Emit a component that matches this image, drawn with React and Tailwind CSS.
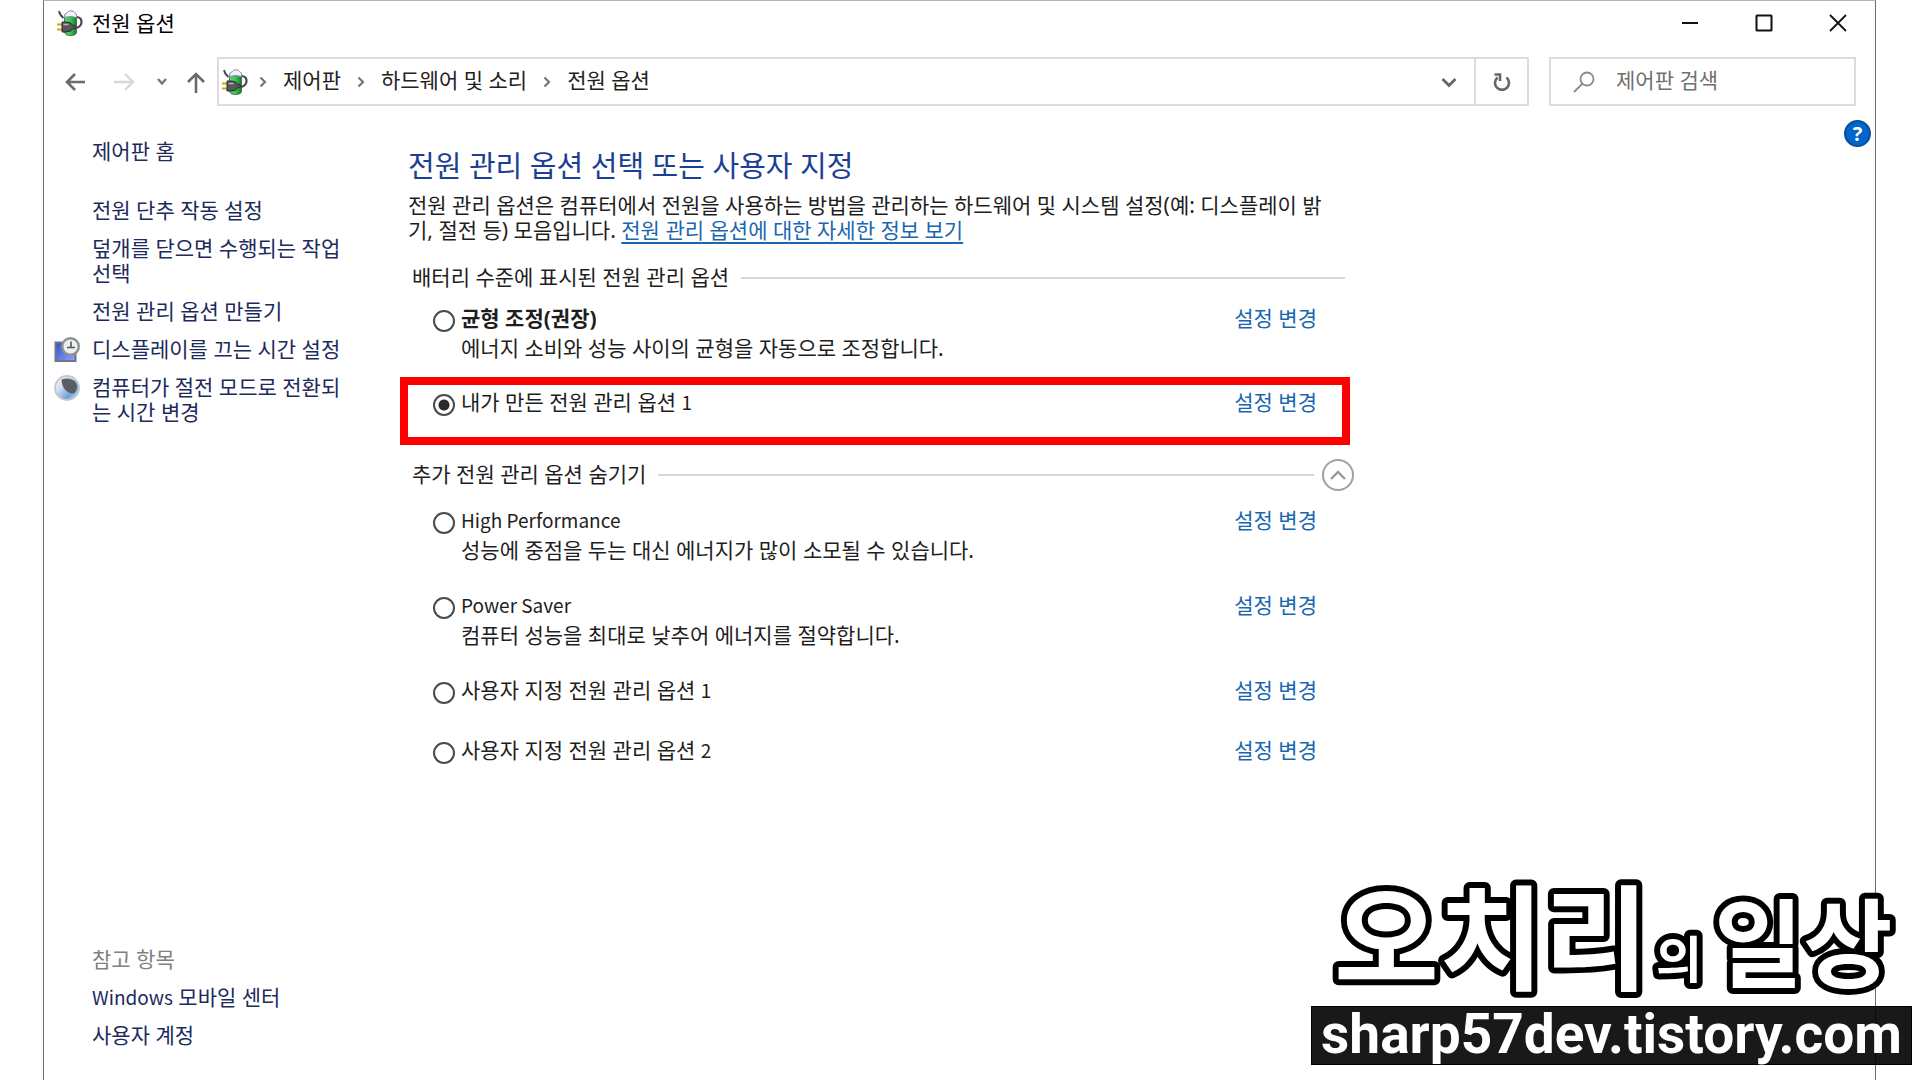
function PowerIcon() {
  return (
    <svg viewBox="0 0 26 26" className="h-[26px] w-[26px] shrink-0" aria-hidden="true">
      <defs>
        <linearGradient id="cell" x1="0" y1="0" x2="1" y2="0">
          <stop offset="0" stopColor="#5fd873" />
          <stop offset="0.5" stopColor="#3cc455" />
          <stop offset="1" stopColor="#157a2c" />
        </linearGradient>
      </defs>
      <path d="M7.5 5 V22 Q8 25.500 13.500 25.500 Q19.500 25.500 19.500 22 V5 Z" fill="url(#cell)" stroke="#3d5a45" strokeWidth="0.800" />
      <path d="M7.500 7.500 Q7 3 10.500 2.500 Q11 0.800 14 0.800 Q17 0.800 17.500 2.500 Q20 3 19.800 7.500 Q13 5.500 7.500 7.500 Z" fill="#f2f2fa" stroke="#8a8aa8" strokeWidth="1" />
      <path d="M20 7 Q24.800 7.500 24.500 12.500 Q24 17 18.500 18" fill="none" stroke="#45494c" strokeWidth="2.200" />
      <path d="M2 1 Q3 5.500 6.500 8" fill="none" stroke="#44484c" strokeWidth="1.800" />
      <path d="M0 14.500 h5 M0 19.500 h5" stroke="#d0a90a" strokeWidth="2.200" />
      <path d="M5 12 h4 q5 0 6.500 3 q3 0 3 2 q0 2 -3 2 q-1.500 3 -6.500 3 h-4 Z" fill="#55585b" stroke="#2a2a2a" strokeWidth="1" />
      <path d="M6.500 14.500 h5" stroke="#b5b5b5" strokeWidth="1.600" />
    </svg>
  );
}

function DisplayClockIcon() {
  return (
    <svg viewBox="0 0 26 26" className="h-[26px] w-[26px]" aria-hidden="true">
      <defs>
        <linearGradient id="screen" x1="0" y1="0" x2="1" y2="1">
          <stop offset="0" stopColor="#3550c8" />
          <stop offset="1" stopColor="#8fa6f5" />
        </linearGradient>
      </defs>
      <rect x="1.500" y="5.500" width="20" height="18.500" fill="url(#screen)" stroke="#6f7590" strokeWidth="2" />
      <circle cx="16.500" cy="9.500" r="8.300" fill="#eef1ee" stroke="#8d9290" strokeWidth="2.400" />
      <path d="M17 4.500 v6.500 M13 10.500 h8" stroke="#41606c" strokeWidth="1.600" />
    </svg>
  );
}

function MoonIcon() {
  return (
    <svg viewBox="0 0 26 26" className="h-[26px] w-[26px]" aria-hidden="true">
      <defs>
        <linearGradient id="moon" x1="0" y1="0" x2="1" y2="1">
          <stop offset="0" stopColor="#f2f5f7" />
          <stop offset="0.350" stopColor="#d3e0f0" />
          <stop offset="0.700" stopColor="#6f9fe0" />
          <stop offset="1" stopColor="#e8eef5" />
        </linearGradient>
      </defs>
      <circle cx="13" cy="13" r="12" fill="url(#moon)" stroke="#c3c9cd" strokeWidth="1.800" />
      <path d="M7.500 4.500 Q16 1.500 21.500 7 Q25 13 20 18.500 Q13 18.500 9.500 12.500 Q7.500 8.500 7.500 4.500 Z" fill="#5a5d61" />
    </svg>
  );
}

function Chevron() {
  return (
    <svg viewBox="0 0 8 12" className="h-3 w-2" fill="none" stroke="#777" strokeWidth="2.200" aria-hidden="true">
      <path d="M1.500 1.500 L6 6 L1.500 10.500" />
    </svg>
  );
}

const tasks = [
  { lines: ["전원 단추 작동 설정"] },
  { lines: ["덮개를 닫으면 수행되는 작업", "선택"] },
  { lines: ["전원 관리 옵션 만들기"] },
  { lines: ["디스플레이를 끄는 시간 설정"], icon: <DisplayClockIcon /> },
  { lines: ["컴퓨터가 절전 모드로 전환되", "는 시간 변경"], icon: <MoonIcon /> },
];

function Latin({ children }) {
  return <span className="font-['Noto_Sans_CJK_KR',sans-serif] text-[19px] leading-none">{children}</span>;
}

function Plan({ id, name, desc, bold, checked }) {
  return (
    <div className="flex min-h-[30px] items-start pr-7 pl-[25px]">
      <input
        type="radio"
        name="plan"
        id={id}
        defaultChecked={checked}
        className="mt-1 h-[22px] w-[22px] shrink-0 appearance-none rounded-full border-2 border-[#4a4a4a] bg-white checked:bg-[radial-gradient(circle,#2b2b2b_5px,#fff_6px)]"
      />
      <div className="ml-[6px] flex-1">
        <label htmlFor={id} className={bold ? "block font-bold" : "block"}>
          {name}
        </label>
        {desc && <p className="mt-[5px]">{desc}</p>}
      </div>
      <a href="#settings" className="text-[#1a66b0]">
        설정 변경
      </a>
    </div>
  );
}

function TitleBar() {
  return (
    <header className="flex h-11 items-center pl-[13px]">
      <PowerIcon />
      <h1 className="ml-[9px] flex-1 text-black">전원 옵션</h1>
      <button aria-label="최소화" className="flex h-full w-[74px] items-center justify-center">
        <svg viewBox="0 0 18 18" className="h-[18px] w-[18px]" stroke="#111" strokeWidth="2" fill="none"><path d="M1 9 h16" /></svg>
      </button>
      <button aria-label="최대화" className="flex h-full w-[74px] items-center justify-center">
        <svg viewBox="0 0 18 18" className="h-[18px] w-[18px]" stroke="#111" strokeWidth="2" fill="none"><rect x="1.500" y="1.500" width="15" height="15" rx="0.500" /></svg>
      </button>
      <button aria-label="닫기" className="flex h-full w-[74px] items-center justify-center">
        <svg viewBox="0 0 18 18" className="h-[18px] w-[18px]" stroke="#111" strokeWidth="1.800" fill="none"><path d="M1 1 L17 17 M17 1 L1 17" /></svg>
      </button>
    </header>
  );
}

function NavBar() {
  return (
    <nav className="mt-3 mr-[19px] ml-5 flex h-[49px] items-center">
      <button aria-label="뒤로">
        <svg viewBox="0 0 24 24" className="h-6 w-6" stroke="#6a6a6a" strokeWidth="2.600" fill="none"><path d="M21 12 H3 M11 4 L3 12 L11 20" /></svg>
      </button>
      <button aria-label="앞으로" className="ml-6">
        <svg viewBox="0 0 24 24" className="h-6 w-6" stroke="#d8d8d8" strokeWidth="2.400" fill="none"><path d="M2 12 H21 M13 4 L21 12 L13 20" /></svg>
      </button>
      <button aria-label="최근 위치" className="ml-[18px]">
        <svg viewBox="0 0 16 16" className="h-4 w-4" stroke="#777" strokeWidth="2.400" fill="none"><path d="M4 5 L8 9.500 L12 5" /></svg>
      </button>
      <button aria-label="위로" className="ml-3.5">
        <svg viewBox="0 0 24 24" className="h-6 w-6" stroke="#6a6a6a" strokeWidth="2.600" fill="none"><path d="M12 23 V4 M4 12 L12 4 L20 12" /></svg>
      </button>
      <div className="ml-[9px] flex h-full flex-1 items-center border-2 border-[#dcdcdc] pl-[3px] text-[#222]">
        <PowerIcon />
        <div className="ml-[11px] flex flex-1 items-center gap-4">
          <Chevron />
          <a href="#panel" className="pb-0.5">제어판</a>
          <Chevron />
          <a href="#hardware" className="pb-0.5">하드웨어 및 소리</a>
          <Chevron />
          <a href="#power" className="pb-0.5">전원 옵션</a>
        </div>
        <button aria-label="이전 위치" className="flex h-full w-[50px] items-center justify-center">
          <svg viewBox="0 0 16 16" className="h-4 w-4" stroke="#666" strokeWidth="2.800" fill="none"><path d="M1.500 5 L8 11.500 L14.500 5" /></svg>
        </button>
        <button aria-label="새로 고침" className="flex h-full w-[53px] items-center justify-center border-l-2 border-[#dcdcdc]">
          <svg viewBox="0 0 18 18" className="h-[18px] w-[18px]" stroke="#666" strokeWidth="2.600" fill="none"><path d="M13.500 4.500 A7 7 0 1 1 4.500 4.500 M1.500 1.500 H7 V8" /></svg>
        </button>
      </div>
      <div className="ml-5 flex h-full w-[307px] items-center border-2 border-[#dcdcdc] pl-[22px]">
        <svg viewBox="0 0 22 22" className="h-[22px] w-[22px] shrink-0" stroke="#8c8a92" strokeWidth="1.800" fill="none" aria-hidden="true"><circle cx="14" cy="8" r="6.500" /><path d="M9.500 12.500 L1 21" /></svg>
        <input aria-label="제어판 검색" placeholder="제어판 검색" className="ml-[21px] w-full min-w-0 pb-0.5 outline-none placeholder:text-[#707070]" />
      </div>
    </nav>
  );
}

function Sidebar() {
  return (
    <aside className="flex w-[364px] shrink-0 flex-col pt-[33px] pb-8 text-[#1c2a5c]">
      <a href="#home" className="pl-12">제어판 홈</a>
      <ul className="mt-[34px] flex flex-col gap-[13px]">
        {tasks.map((t) => (
          <li key={t.lines[0]} className="flex items-start pl-2.5">
            <span className="mr-3 h-[25px] w-[26px] shrink-0">{t.icon}</span>
            <a href="#task">
              {t.lines.map((l) => (
                <span key={l} className="block whitespace-nowrap">{l}</span>
              ))}
            </a>
          </li>
        ))}
      </ul>
      <div className="mt-auto flex flex-col gap-[13px] pl-12">
        <h2 className="text-[#808080]">참고 항목</h2>
        <a href="#mobility"><Latin>Windows</Latin> 모바일 센터</a>
        <a href="#accounts">사용자 계정</a>
      </div>
    </aside>
  );
}

function Main() {
  return (
    <main className="max-w-[937px] flex-1 pt-10 text-[#1e1e1e]">
      <h2 className="text-[29px] leading-10 text-[#1c3f94]">전원 관리 옵션 선택 또는 사용자 지정</h2>
      <p className="mt-[7px]">
        <span className="block whitespace-nowrap">전원 관리 옵션은 컴퓨터에서 전원을 사용하는 방법을 관리하는 하드웨어 및 시스템 설정(예: 디스플레이 밝</span>
        기, 절전 등) 모음입니다.{" "}
        <a href="#more" className="text-[#1a66b0] underline decoration-2 underline-offset-4">전원 관리 옵션에 대한 자세한 정보 보기</a>
      </p>
      <fieldset>
        <div className="mt-[22px] flex items-center gap-3 pl-1">
          <h3>배터리 수준에 표시된 전원 관리 옵션</h3>
          <span className="h-0.5 flex-1 bg-[#d8d8d8]" />
        </div>
        <div className="mt-4">
          <Plan id="balanced" bold name="균형 조정(권장)" desc="에너지 소비와 성능 사이의 균형을 자동으로 조정합니다." />
        </div>
        <div className="mt-4 -mr-[5px] -ml-2 border-8 border-[#ff0000] pt-[5px] pb-[17px]">
          <div className="-mr-[3px]">
            <Plan id="mine" checked name={<>내가 만든 전원 관리 옵션 <Latin>1</Latin></>} />
          </div>
        </div>
        <div className="mt-[17px] -mr-[9px] flex items-center pl-1">
          <h3>추가 전원 관리 옵션 숨기기</h3>
          <span className="ml-3 h-0.5 flex-1 bg-[#d8d8d8]" />
          <button aria-label="추가 옵션 숨기기" className="-my-1 ml-2 flex h-8 w-8 items-center justify-center rounded-full border-2 border-[#a0a0a0]">
            <svg viewBox="0 0 16 10" className="h-2.5 w-4" stroke="#999" strokeWidth="2.400" fill="none"><path d="M1 9 L8 2 L15 9" /></svg>
          </button>
        </div>
        <div className="mt-[21px] flex flex-col gap-[30px]">
          <Plan id="high" name={<Latin>High Performance</Latin>} desc="성능에 중점을 두는 대신 에너지가 많이 소모될 수 있습니다." />
          <Plan id="saver" name={<Latin>Power Saver</Latin>} desc="컴퓨터 성능을 최대로 낮추어 에너지를 절약합니다." />
          <Plan id="custom1" name={<>사용자 지정 전원 관리 옵션 <Latin>1</Latin></>} />
          <Plan id="custom2" name={<>사용자 지정 전원 관리 옵션 <Latin>2</Latin></>} />
        </div>
      </fieldset>
    </main>
  );
}

function Watermark() {
  return (
    <div className="pointer-events-none absolute right-2 bottom-[15px] w-[601px]">
      <svg
        viewBox="0 0 601 140"
        className="h-[140px] w-full overflow-visible font-['Noto_Sans_CJK_KR',sans-serif] font-bold [paint-order:stroke_fill]"
        fill="#fff"
        stroke="#000"
        strokeWidth="12"
        strokeLinejoin="round"
      >
        <text x="23" y="115" fontSize="114">오치리</text>
        <text x="345" y="112" fontSize="50">의</text>
        <text x="403" y="114" fontSize="97">일상</text>
      </svg>
      <div className="h-[59px] border border-black bg-black/90 text-center font-['Roboto',sans-serif] text-[55px] leading-[54px] font-bold whitespace-nowrap text-white">
        sharp57dev.tistory.com
      </div>
    </div>
  );
}

export default function App() {
  return (
    <div className="relative flex min-h-screen bg-white pr-11 pl-[43px] font-['Noto_Sans','Noto_Sans_CJK_KR',sans-serif] text-[21px] leading-[25px]">
      <div className="flex flex-1 flex-col border-x border-t border-[#6e6e6e] border-t-[#b4b4b4]">
        <TitleBar />
        <NavBar />
        <div className="flex flex-1">
          <Sidebar />
          <Main />
          <button aria-label="도움말" className="mt-3.5 mr-1 ml-auto flex h-[27px] w-[27px] items-center justify-center rounded-full border-2 border-[#0a4f94] bg-[#0066cc] text-xl font-bold text-white">
            ?
          </button>
        </div>
      </div>
      <Watermark />
    </div>
  );
}
